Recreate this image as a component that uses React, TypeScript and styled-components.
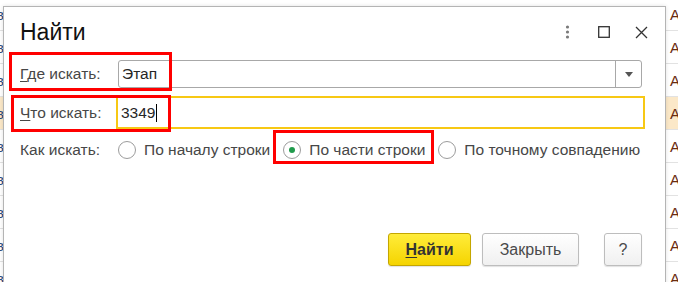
import React from 'react'
import styled, {createGlobalStyle} from 'styled-components'

const GlobalStyle = createGlobalStyle`
  html, body {
    margin: 0;
    padding: 0;
    background: #ffffff;
    overflow: hidden;
  }
  body {
    font-family: "Liberation Sans", Arial, sans-serif;
  }
`

const Desktop = styled.div`
  position: relative;
  width: 678px;
  height: 282px;
  overflow: hidden;
  background: #ffffff;
`

const TopLine = styled.div`
  height: 2px;
  background: #1b1b1b;
`

const Table = styled.div`
  display: flex;
  flex-direction: column;
  margin-top: -4px;
`

const TableRow = styled.div<{ $active?: boolean }>`
  display: grid;
  grid-template-columns: 4px 664px 1fr;
  height: 32px;
  border-bottom: 1px solid #e2e2e2;
  background: ${p => (p.$active ? '#fbe8c8' : '#ffffff')};
  align-items: center;
  font-size: 15px;
`

const EdgeCell = styled.div`
  overflow: hidden;
  white-space: nowrap;
  color: #2c4a7a;
  direction: rtl;
`

const GapCell = styled.div``

const RightCell = styled.div`
  overflow: hidden;
  white-space: nowrap;
  color: #6b2c10;
  padding-left: 2px;
`

const Window = styled.div`
  position: absolute;
  left: 3px;
  top: 6px;
  width: 661px;
  height: 300px;
  background: #ffffff;
  border: 1px solid #b4b4b4;
  box-shadow: 0 0 4px rgba(0, 0, 0, 0.12);
  display: flex;
  flex-direction: column;
`

const Header = styled.div`
  display: flex;
  align-items: center;
  height: 44px;
  padding: 0 17px 0 16px;
  box-sizing: border-box;
`

const Title = styled.div`
  flex: 1;
  font-size: 23px;
  line-height: 26px;
  color: #111111;
  padding-top: 6px;
`

const HeaderIcons = styled.div`
  display: flex;
  align-items: center;
  padding-top: 6px;
`

const IconSlot = styled.div<{ $gap?: number }>`
  display: flex;
  margin-left: ${p => p.$gap ?? 0}px;
`

const Body = styled.div`
  display: flex;
  flex-direction: column;
  padding: 9px 23px 0 16px;
`

const FieldRow = styled.div<{ $h: number; $top?: number }>`
  display: flex;
  align-items: center;
  height: ${p => p.$h}px;
  margin-top: ${p => p.$top ?? 0}px;
`

const Label = styled.div`
  width: 98px;
  flex: none;
  font-size: 15.5px;
  color: #474747;
  white-space: nowrap;
`

const Hot = styled.span`
  text-decoration: underline;
  text-underline-offset: 2px;
`

const Input = styled.div<{ $focused?: boolean }>`
  flex: 1;
  display: flex;
  align-items: stretch;
  box-sizing: border-box;
  height: 100%;
  border: ${p => (p.$focused ? '2px solid #f7c814' : '1px solid #a8a8a8')};
  border-radius: ${p => (p.$focused ? '0' : '3px')};
  margin-left: ${p => (p.$focused ? '-2px' : '0')};
  margin-right: ${p => (p.$focused ? '-3px' : '0')};
  background: #ffffff;
`

const InputText = styled.div`
  flex: 1;
  display: flex;
  align-items: center;
  padding-left: 3px;
  font-size: 15.5px;
  color: #262626;
`

const Caret = styled.span`
  display: inline-block;
  width: 1px;
  height: 18px;
  background: #000000;
  margin-left: 1px;
`

const DropButton = styled.div`
  width: 25px;
  border-left: 1px solid #a8a8a8;
  display: flex;
  align-items: center;
  justify-content: center;
`

const RadioRow = styled.div`
  display: flex;
  align-items: center;
  height: 24px;
  margin-top: 9px;
`

const RadioItem = styled.div`
  display: flex;
  align-items: center;
  gap: 8px;
  margin-right: 13px;
  font-size: 15.5px;
  color: #474747;
  white-space: nowrap;
`

const RadioCircle = styled.div<{ $checked?: boolean }>`
  width: 18px;
  height: 18px;
  box-sizing: border-box;
  border: 1px solid #9c9c9c;
  border-radius: 50%;
  display: flex;
  align-items: center;
  justify-content: center;

  &::after {
    content: '';
    display: ${p => (p.$checked ? 'block' : 'none')};
    width: 6px;
    height: 6px;
    border-radius: 50%;
    background: #1f9a4b;
  }
`

const Footer = styled.div`
  display: flex;
  justify-content: flex-end;
  align-items: center;
  margin-top: 71px;
`

const Button = styled.button<{ $primary?: boolean; $w: number; $gap?: number }>`
  width: ${p => p.$w}px;
  height: 33px;
  margin-left: ${p => p.$gap ?? 0}px;
  box-sizing: border-box;
  border-radius: 3px;
  font-family: "Liberation Sans", Arial, sans-serif;
  font-size: 16px;
  font-weight: ${p => (p.$primary ? 700 : 400)};
  color: ${p => (p.$primary ? '#333333' : '#4a4a4a')};
  border: 1px solid ${p => (p.$primary ? '#c4a600' : '#bdbdbd')};
  background: ${p =>
    p.$primary
      ? 'linear-gradient(#ffec3a, #f5d400)'
      : 'linear-gradient(#ffffff, #f0f0f0)'};
  box-shadow: 0 1px 1px rgba(0, 0, 0, 0.12);
  padding: 0;
`

const Highlight = styled.div<{ $x: number; $y: number; $w: number; $h: number }>`
  position: absolute;
  left: ${p => p.$x}px;
  top: ${p => p.$y}px;
  width: ${p => p.$w}px;
  height: ${p => p.$h}px;
  box-sizing: border-box;
  border: 3px solid #ff0000;
  pointer-events: none;
`

const rows = [false, false, false, true, false, false, false, false, false]

const App: React.FC = () => {
    return <>
        <GlobalStyle/>
        <Desktop>
            <TopLine/>
            <Table>
                {rows.map((active, i) => (
                    <TableRow key={i} $active={active}>
                        <EdgeCell>в</EdgeCell>
                        <GapCell/>
                        <RightCell>Ар</RightCell>
                    </TableRow>
                ))}
            </Table>

            <Window>
                <Header>
                    <Title>Найти</Title>
                    <HeaderIcons>
                        <IconSlot>
                            <svg width="5" height="14" viewBox="0 0 5 14">
                                <circle cx="2.5" cy="2" r="1.6" fill="#7a7a7a"/>
                                <circle cx="2.5" cy="7" r="1.6" fill="#7a7a7a"/>
                                <circle cx="2.5" cy="12" r="1.6" fill="#7a7a7a"/>
                            </svg>
                        </IconSlot>
                        <IconSlot $gap={28}>
                            <svg width="12" height="12" viewBox="0 0 12 12">
                                <rect x="0.7" y="0.7" width="10.6" height="10.6" fill="none" stroke="#333"
                                      strokeWidth="1.3"/>
                            </svg>
                        </IconSlot>
                        <IconSlot $gap={25}>
                            <svg width="13" height="13" viewBox="0 0 13 13">
                                <path d="M1 1 L12 12 M12 1 L1 12" stroke="#333" strokeWidth="1.3"/>
                            </svg>
                        </IconSlot>
                    </HeaderIcons>
                </Header>

                <Body>
                    <FieldRow $h={28}>
                        <Label><Hot>Г</Hot>де искать:</Label>
                        <Input>
                            <InputText>Этап</InputText>
                            <DropButton>
                                <svg width="8" height="5" viewBox="0 0 8 5">
                                    <path d="M0 0 H8 L4 5 Z" fill="#555"/>
                                </svg>
                            </DropButton>
                        </Input>
                    </FieldRow>
                    <FieldRow $h={33} $top={8}>
                        <Label><Hot>Ч</Hot>то искать:</Label>
                        <Input $focused>
                            <InputText>3349<Caret/></InputText>
                        </Input>
                    </FieldRow>
                    <RadioRow>
                        <Label>Как искать:</Label>
                        <RadioItem><RadioCircle/>По началу строки</RadioItem>
                        <RadioItem><RadioCircle $checked/>По части строки</RadioItem>
                        <RadioItem><RadioCircle/>По точному совпадению</RadioItem>
                    </RadioRow>
                    <Footer>
                        <Button $primary $w={83}><Hot>Н</Hot>айти</Button>
                        <Button $w={97} $gap={11}>Закрыть</Button>
                        <Button $w={38} $gap={25}>?</Button>
                    </Footer>
                </Body>
            </Window>

            <Highlight $x={9} $y={52} $w={163} $h={39}/>
            <Highlight $x={11} $y={95} $w={160} $h={37}/>
            <Highlight $x={273} $y={130} $w={161} $h={34}/>
        </Desktop>
    </>
}

export default App
